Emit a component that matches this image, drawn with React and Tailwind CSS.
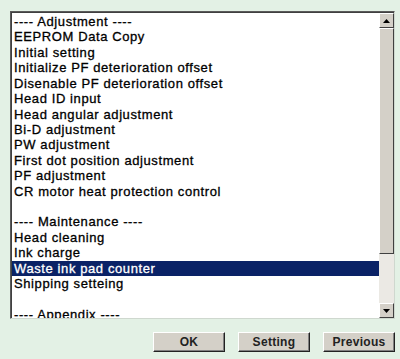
import React from "react";

const items = [
  "---- Adjustment ----",
  "EEPROM Data Copy",
  "Initial setting",
  "Initialize PF deterioration offset",
  "Disenable PF deterioration offset",
  "Head ID input",
  "Head angular adjustment",
  "Bi-D adjustment",
  "PW adjustment",
  "First dot position adjustment",
  "PF adjustment",
  "CR motor heat protection control",
  "",
  "---- Maintenance ----",
  "Head cleaning",
  "Ink charge",
  "Waste ink pad counter",
  "Shipping setteing",
  "",
  "---- Appendix ----",
];

function Btn({ children }) {
  return (
    <div className="w-[72px] h-[20px] bg-[#d4d0c8] border border-t-white border-l-white border-r-[#222] border-b-[#222] shadow-[inset_-1px_-1px_0_#808080] flex items-center justify-center text-[12px] font-bold text-[#222] tracking-[0.3px]">
      {children}
    </div>
  );
}

export default function App() {
  return (
    <div
      className="w-[400px] h-[359px] bg-[#e3f1e5] pt-[11px] pl-[10px] pr-[5px] flex flex-col"
      style={{ fontFamily: '"Liberation Sans", Arial, sans-serif' }}
    >
      <div className="h-[308px] border border-t-[#5a5a5a] border-l-[#5a5a5a] border-r-[#cfd8cf] border-b-[#cfd8cf] bg-white flex overflow-hidden">
        <div className="flex-1 border-t border-l border-[#404040] overflow-hidden pt-[1px]">
          {items.map((t, i) => (
            <div
              key={i}
              className={
                "h-[15.43px] leading-[15.43px] text-[13px] tracking-[0.6px] whitespace-nowrap pl-[2px] [-webkit-text-stroke:0.3px_currentColor] " +
                (t === "Waste ink pad counter"
                  ? "bg-[#0a2266] text-white"
                  : "text-black")
              }
            >
              {t || "\u00a0"}
            </div>
          ))}
        </div>
        <div className="w-[15px] bg-[#ebe9e4] flex flex-col border-t border-[#404040]">
          <div className="h-[15px] bg-[#d4d0c8] border border-t-white border-l-white border-r-[#404040] border-b-[#404040] flex items-center justify-center">
            <svg width="7" height="4" viewBox="0 0 7 4"><path d="M3.5 0 L7 4 L0 4 Z" fill="#000" /></svg>
          </div>
          <div className="h-[226px] bg-[#d4d0c8] border border-t-white border-l-white border-r-[#404040] border-b-[#404040]" />
          <div className="flex-1" />
          <div className="h-[15px] bg-[#d4d0c8] border border-t-white border-l-white border-r-[#404040] border-b-[#404040] flex items-center justify-center">
            <svg width="7" height="4" viewBox="0 0 7 4"><path d="M0 0 L7 0 L3.5 4 Z" fill="#000" /></svg>
          </div>
        </div>
      </div>
      <div className="flex justify-end gap-[13px] mt-[13px]">
        <Btn>OK</Btn>
        <Btn>Setting</Btn>
        <Btn>Previous</Btn>
      </div>
    </div>
  );
}
